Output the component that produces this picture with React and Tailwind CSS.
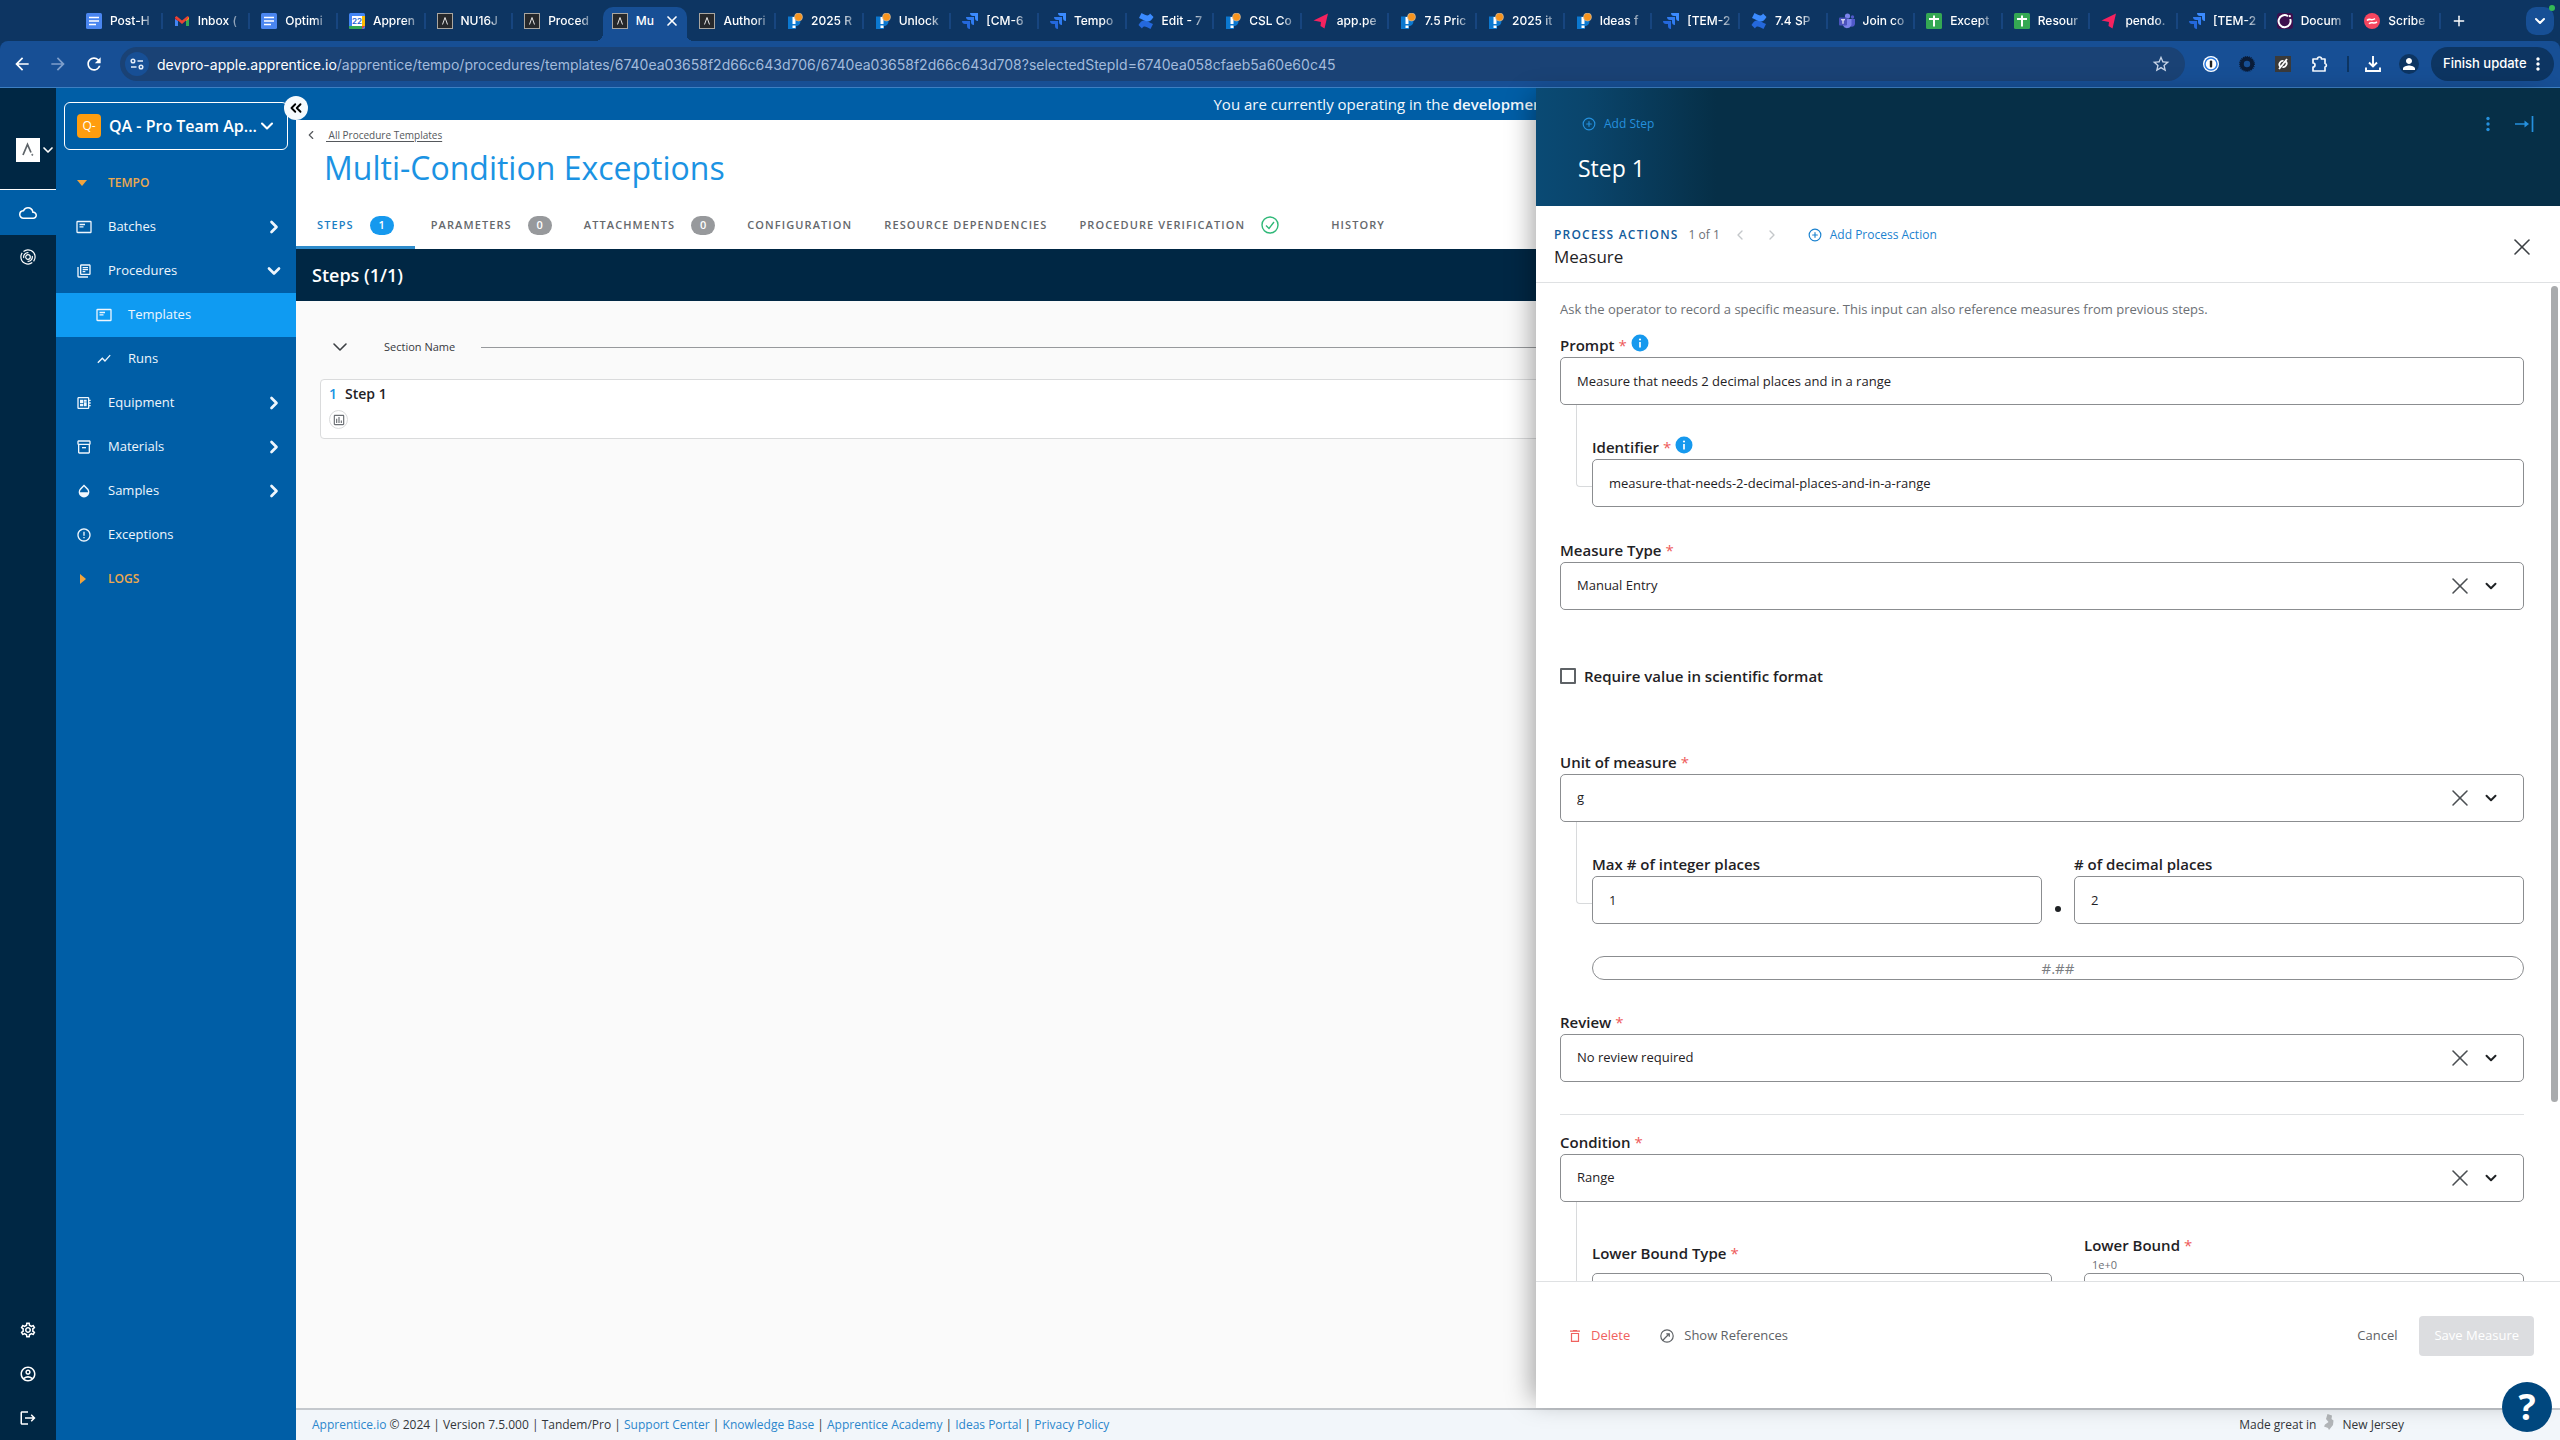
import React from "react";
import {
  MdOutlineCloud, MdOutlineLibraryBooks, MdShowChart, MdOutlineDeveloperBoard, MdOutlineInventory2,
  MdOpacity, MdErrorOutline, MdOutlineSettings, MdOutlineAccountCircle, MdLogout, MdOutlineInsertChart,
  MdStarOutline, MdPerson, MdMoreVert, MdArrowBack, MdArrowForward, MdRefresh,
} from "react-icons/md";
import { CirclePlus, ChevronDown, ChevronRight, ChevronLeft, ChevronsLeft, X, Plus } from "lucide-react";

/* ---------- favicons ---------- */
const Docs = () => (
  <svg viewBox="0 0 16 16" className="size-4 shrink-0"><rect width="16" height="16" rx="1.5" fill="#4a86f0" /><path d="M3 4.5h10M3 8h10M3 11.5h7" stroke="#fff" strokeWidth="1.6" /></svg>
);
const Gmail = () => (
  <svg viewBox="0 0 16 16" className="size-4 shrink-0">
    <path d="M1 4v9h3V7z" fill="#4285f4" /><path d="M15 4v9h-3V7z" fill="#34a853" />
    <path d="M1 3.5 4 5.5V8L1 6z" fill="#c5221f" /><path d="M15 3.5 12 5.5V8l3-2z" fill="#fbbc04" />
    <path d="M1 4.500 2.500 3 8 7.500 13.500 3 15 4.500 12 8v-.5l-4 3.500-4-3.500z" fill="#ea4335" />
  </svg>
);
const Calendar = () => (
  <svg viewBox="0 0 16 16" className="size-4 shrink-0">
    <rect width="16" height="16" rx="1.5" fill="#4285f4" /><path d="M13 3h3v10h-3z" fill="#fbbc04" />
    <path d="M0 13h13v3H1.500A1.500 1.500 0 0 1 0 14.500z" fill="#34a853" /><path d="M13 13h3l-3 3z" fill="#ea4335" />
    <rect x="3" y="3" width="10" height="10" fill="#fff" />
    <text x="8" y="11" textAnchor="middle" fontSize="8" fontWeight="600" fill="#1a62d6" fontFamily="Inter, sans-serif">22</text>
  </svg>
);
const Apprentice = () => (
  <svg viewBox="0 0 16 16" className="size-4 shrink-0"><rect x=".5" y=".5" width="15" height="15" fill="#26282b" stroke="#a9a6a0" /><path d="M5.500 11.500 8 4.500l2.500 7" fill="none" stroke="#e8e8e8" /></svg>
);
const Product = () => (
  <svg viewBox="0 0 16 16" className="size-4 shrink-0">
    <path d="M1 3.500h9a5 5 0 0 1 0 9.500H9v3H1z" fill="#0b78d0" /><path d="M5.500 4h3v7h-3zM5.500 12.500h3V15h-3z" fill="#fff" />
    <circle cx="11.500" cy="4" r="4" fill="#f7941e" stroke="#c9c2b8" strokeWidth=".6" />
  </svg>
);
const Jira = () => (
  <svg viewBox="0 0 16 16" className="size-4 shrink-0">
    <path d="M8 0h8v8c-2 0-3-1.300-3-3V3h-2C9.300 3 8 2 8 0z" fill="#3b8bff" />
    <path d="M4 4h8v8c-2 0-3-1.300-3-3V7H7C5.300 7 4 6 4 4z" fill="#2f7bf0" />
    <path d="M0 8h8v8c-2 0-3-1.300-3-3v-2H3c-1.700 0-3-1-3-3z" fill="#2468dc" />
  </svg>
);
const Confluence = () => (
  <svg viewBox="0 0 16 16" className="size-4 shrink-0">
    <path d="M.5 12C4.500 5 7.500 7.500 15 11l-2.500 5C8 14 6 12 4 15.500z" fill="#2468dc" />
    <path d="M15.500 4C11.500 11 8.500 8.500 1 5L3.500 0C8 2 10 4 12 .5z" fill="#3b8bff" />
  </svg>
);
const Pendo = () => (
  <svg viewBox="0 0 16 16" className="size-4 shrink-0"><path d="M.5 7.500 15 .5 11.500 15.500 7.500 13l.5-4z" fill="#f5225f" /></svg>
);
const Teams = () => (
  <svg viewBox="0 0 16 16" className="size-4 shrink-0">
    <circle cx="8.500" cy="3" r="2.600" fill="#7b83eb" /><circle cx="13.500" cy="4" r="1.700" fill="#5059c9" />
    <path d="M11 6h5v5a3 3 0 0 1-4 2.500z" fill="#5059c9" /><path d="M4 6h8.500v5.500a4.500 4.500 0 0 1-8.500 1z" fill="#7b83eb" />
    <rect y="4.500" width="8" height="8" rx="1" fill="#4b53bc" /><path d="M2 6.700h4M4 6.700v4" stroke="#fff" strokeWidth="1.100" />
  </svg>
);
const Sheets = () => (
  <svg viewBox="0 0 16 16" className="size-4 shrink-0"><rect width="16" height="16" rx="1.500" fill="#34a853" /><path d="M3 6h10M8 2.500v11" stroke="#fff" strokeWidth="2" /></svg>
);
const DocRing = () => (
  <svg viewBox="0 0 16 16" className="size-4 shrink-0"><rect width="16" height="16" rx="3" fill="#3d0f4e" /><path d="M11 3.200A6 6 0 1 0 13.200 6" fill="none" stroke="#fff" strokeWidth="2" /><circle cx="12.800" cy="3.200" r="1.100" fill="#fff" /></svg>
);
const Scribe = () => (
  <svg viewBox="0 0 16 16" className="size-4 shrink-0"><circle cx="8" cy="8" r="8" fill="#f5455f" /><path d="M3 7.500c3-3 4 1 8-1.800M5 10.800c3-3 4 1 8-1.800" fill="none" stroke="#fff" strokeWidth="1.600" /></svg>
);

const TABS = [
  [Docs, "Post-H"], [Gmail, "Inbox ("], [Docs, "Optimi"], [Calendar, "Appren"], [Apprentice, "NU16J"],
  [Apprentice, "Proced"], [Apprentice, "Mu", true], [Apprentice, "Authori"], [Product, "2025 R"], [Product, "Unlock"],
  [Jira, "[CM-6"], [Jira, "Tempo"], [Confluence, "Edit - 7"], [Product, "CSL Co"], [Pendo, "app.pe"],
  [Product, "7.5 Pric"], [Product, "2025 it"], [Product, "Ideas f"], [Jira, "[TEM-2"], [Confluence, "7.4 SP"],
  [Teams, "Join co"], [Sheets, "Except"], [Sheets, "Resour"], [Pendo, "pendo."], [Jira, "[TEM-2"],
  [DocRing, "Docum"], [Scribe, "Scribe"],
];

function BrowserTabs() {
  return (
    <div className="flex h-[41px] bg-[#0d3562] pl-[75px] text-[12px] font-medium text-white">
      <div className="flex min-w-0 flex-1" role="tablist">
        {TABS.map(([Icon, title, active], i) => (
          <div key={i} className="relative min-w-0 flex-1 pt-[7px]">
            {active && (
              <>
                <span className="absolute bottom-0 -left-1.5 size-2 bg-[radial-gradient(circle_at_0_0,transparent_8px,#174f95_8px)]" />
                <span className="absolute bottom-0 -right-1.5 size-2 bg-[radial-gradient(circle_at_100%_0,transparent_8px,#174f95_8px)]" />
              </>
            )}
            <button
              role="tab"
              aria-selected={!!active}
              className={active
                ? "mx-0.5 flex h-[34px] w-[84px] items-center rounded-t-[10px] bg-[#174f95] pb-[7px] pl-[9px]"
                : "flex h-[34px] w-full items-center pb-[7px] pl-[11px]"}
            >
              <Icon />
              <span className={active
                ? "ml-2 whitespace-nowrap"
                : "ml-2 text-left whitespace-nowrap [mask-image:linear-gradient(to_right,#000_75%,#0006)]"}>{title}</span>
              {active && <X className="ml-2.5 size-4 shrink-0" strokeWidth={2.5} />}
            </button>
            {!active && i !== 5 && <span className="absolute top-[13px] right-0 h-4 w-[2px] bg-[#17457f]" />}
          </div>
        ))}
      </div>
      <div className="flex w-[119px] justify-between pt-[7px] pr-1.5">
        <button aria-label="New tab" className="ml-2.5 flex h-7 items-center"><Plus className="size-4" strokeWidth={2.2} /></button>
        <button aria-label="Search tabs" className="relative flex size-7 items-center justify-center rounded-[10px] bg-[#174f95]">
          <ChevronDown className="size-4" strokeWidth={3} />
          <span className="absolute -top-0.5 -right-px size-1.5 rounded-full bg-[#34b856]" />
        </button>
      </div>
    </div>
  );
}

function Toolbar() {
  return (
    <div className="bg-[#0d3562]">
      <div className="flex h-[47px] items-center rounded-t-lg border-b border-[#3d7fc2] bg-[#174f95] pr-1.5 pl-3 text-white">
        <button aria-label="Back" className="flex w-9 shrink-0"><MdArrowBack className="size-5" /></button>
        <button aria-label="Forward" className="flex w-9 shrink-0 text-[#7f9fcb]"><MdArrowForward className="size-5" /></button>
        <button aria-label="Reload" className="flex w-9 shrink-0"><MdRefresh className="size-5" /></button>
        <div className="flex h-[34px] min-w-0 flex-1 items-center rounded-full bg-[#1a4275] pr-3.5 pl-[5px]">
          <button aria-label="Site information" className="flex size-6 shrink-0 items-center justify-center rounded-full bg-[#174f95]">
            <svg viewBox="0 0 16 16" className="size-4" fill="none" stroke="#e5edf8" strokeWidth="1.500"><circle cx="4" cy="5" r="1.800" /><path d="M8.500 5H14M2 11h5.500" /><circle cx="12" cy="11" r="1.800" /></svg>
          </button>
          <p className="ml-2 min-w-0 flex-1 truncate text-[14px] text-[#a3bbdc]"><span className="text-white">devpro-apple.apprentice.io</span>/apprentice/tempo/procedures/templates/6740ea03658f2d66c643d706/6740ea03658f2d66c643d708?selectedStepId=6740ea058cfaeb5a60e60c45</p>
          <button aria-label="Bookmark"><MdStarOutline className="size-5 text-[#c6d3e6]" /></button>
        </div>
        <div className="ml-[18px] flex items-center gap-5">
          <svg viewBox="0 0 16 16" className="size-4"><circle cx="8" cy="8" r="8" fill="#fff" /><circle cx="8" cy="8" r="6" fill="#fff" stroke="#2c7be0" strokeWidth="1.500" /><rect x="6.800" y="4.500" width="2.400" height="7" rx="1" fill="#222" /></svg>
          <svg viewBox="0 0 16 16" className="size-4"><circle cx="8" cy="8" r="5.200" fill="none" stroke="#0a1c38" strokeWidth="4" /><circle cx="8" cy="8" r="7.300" fill="none" stroke="#0a1c38" strokeWidth="1.400" strokeDasharray="1 1" /></svg>
          <svg viewBox="0 0 16 16" className="size-4"><rect width="16" height="16" fill="#3a3a3a" /><path d="m4 13 8-10M5 10.500C3 8 6 4 8.500 5M11 5.500c2 2.500-1 6.500-3.500 5.500" fill="none" stroke="#fff" strokeWidth="1.800" /></svg>
          <svg viewBox="0 0 18 18" className="size-[18px]" fill="none" stroke="#f4f8fd" strokeWidth="1.700" strokeLinejoin="round"><path d="M2 4h4.500a2 2 0 0 1 4 0H14v4.500a1.800 1.800 0 0 1 0 3.500v4H2v-4a2 2 0 0 0 0-4z" /></svg>
        </div>
        <span className="ml-[18px] h-4 w-[2px] bg-[#0d3562]" />
        <button aria-label="Downloads" className="ml-4"><svg viewBox="0 0 16 16" className="size-4" fill="none" stroke="#fff" strokeWidth="1.900"><path d="M8 0v10M4 6.500 8 10.500l4-4M1 11.500V15h14v-3.500" /></svg></button>
        <button aria-label="Profile" className="ml-[18px] flex size-5 items-center justify-center rounded-full bg-[#0d3562]"><MdPerson className="size-[18px]" /></button>
        <button className="ml-3 flex h-[34px] w-[123px] items-center justify-between rounded-full bg-[#0d3562] pr-1.5 pl-3 text-[13px] font-medium whitespace-nowrap">Finish update<MdMoreVert className="size-5 shrink-0" /></button>
      </div>
    </div>
  );
}

/* ---------- left navigation ---------- */
const PanelIcon = ({ className }) => (
  <svg viewBox="0 0 16 16" className={className} fill="none" stroke="currentColor" strokeWidth="1.300"><rect x="1" y="2.500" width="14" height="11" rx=".6" /><path d="M3.500 5.500h5.500M3.500 7.800h4" /></svg>
);
const Swirl = () => (
  <svg viewBox="0 0 16 16" className="size-4" fill="none" stroke="#fff" strokeWidth="1.200">
    <path d="M3.500 2.500A7.100 7.100 0 0 1 15.100 8a7.100 7.100 0 0 1-1.500 4.400M12.300 13.600A7.100 7.100 0 0 1 .9 8a7 7 0 0 1 1.300-4.200" />
    <circle cx="8" cy="8" r="2.300" /><path d="M3.800 9a4.300 4.300 0 0 1 4.600-5.300M12.200 7a4.300 4.300 0 0 1-4.600 5.300" />
  </svg>
);

function Rail() {
  return (
    <nav aria-label="Products" className="flex w-14 shrink-0 flex-col bg-[#002744] text-white">
      <button aria-label="Switch product" className="flex h-[102px] items-center border-b border-white pt-[22px] pl-4">
        <span className="flex size-6 items-center justify-center bg-white">
          <svg viewBox="0 0 16 16" className="size-4" fill="none" stroke="#5d6368" strokeWidth="1.700"><path d="M3 13 7.500 2.500 11 10.500" /><circle cx="12.300" cy="12.800" r=".6" fill="#5d6368" strokeWidth=".8" /></svg>
        </span>
        <ChevronDown className="size-4" strokeWidth={2.5} />
      </button>
      <button aria-label="Tempo" className="flex h-[45px] items-center justify-center bg-[#005ea6]"><MdOutlineCloud className="size-[18px]" /></button>
      <button aria-label="Tandem" className="flex h-11 items-center justify-center"><Swirl /></button>
      <div className="flex-1" />
      <button aria-label="Settings" className="flex h-11 items-center justify-center"><MdOutlineSettings className="size-[18px]" /></button>
      <button aria-label="Account" className="flex h-11 items-center justify-center"><MdOutlineAccountCircle className="size-[18px]" /></button>
      <button aria-label="Log out" className="flex h-11 items-center justify-center"><MdLogout className="size-[18px]" /></button>
    </nav>
  );
}

function NavRow({ icon: Icon, label, chevron: Chev, nested, active }) {
  return (
    <li>
      <a href="#" className={`flex h-11 items-center pr-3 ${nested ? "pl-10" : "pl-5"} ${active ? "bg-[#0f9bf2]" : ""}`}>
        <Icon className="size-4" />
        <span className="ml-4 flex-1">{label}</span>
        {Chev && <Chev className="size-5" strokeWidth={3.2} />}
      </a>
    </li>
  );
}

function Sidebar() {
  return (
    <aside className="relative w-60 shrink-0 bg-[#005ea6] text-[13px] text-[#eef6fd]">
      <button className="mt-3.5 ml-2 flex h-12 w-56 items-center rounded-md border border-white pr-2.5 pl-3 text-[16px] font-semibold text-white">
        <span className="flex size-6 items-center justify-center rounded bg-[#ff9d0e] text-[12px] font-normal">Q-</span>
        <span className="ml-2 flex-1 text-left whitespace-nowrap">QA - Pro Team Ap...</span>
        <ChevronDown className="size-5" strokeWidth={2.5} />
      </button>
      <button aria-label="Collapse menu" className="absolute top-2 -right-3 z-10 flex size-6 items-center justify-center rounded-full bg-[#f6fafd] text-black"><ChevronsLeft className="size-[18px]" strokeWidth={2.5} /></button>
      <ul className="mt-[11px]">
        <li><button className="flex h-11 w-full items-center pl-[21px] text-[12px] font-semibold text-[#eda94e]"><svg viewBox="0 0 10 6" className="h-1.5 w-2.5"><path d="M0 0h10L5 6z" fill="#f2a43c" /></svg><span className="ml-[21px]">TEMPO</span></button></li>
        <NavRow icon={PanelIcon} label="Batches" chevron={ChevronRight} />
        <NavRow icon={MdOutlineLibraryBooks} label="Procedures" chevron={ChevronDown} />
        <NavRow icon={PanelIcon} label="Templates" nested active />
        <NavRow icon={MdShowChart} label="Runs" nested />
        <NavRow icon={MdOutlineDeveloperBoard} label="Equipment" chevron={ChevronRight} />
        <NavRow icon={MdOutlineInventory2} label="Materials" chevron={ChevronRight} />
        <NavRow icon={MdOpacity} label="Samples" chevron={ChevronRight} />
        <NavRow icon={MdErrorOutline} label="Exceptions" />
        <li><button className="flex h-11 w-full items-center pl-[24px] text-[12px] font-semibold text-[#eda94e]"><svg viewBox="0 0 6 10" className="h-2.5 w-1.5"><path d="M0 0v10l6-5z" fill="#f2a43c" /></svg><span className="ml-[22px]">LOGS</span></button></li>
      </ul>
    </aside>
  );
}

/* ---------- main area ---------- */
function PageTab({ label, count, active, check }) {
  return (
    <button
      role="tab"
      aria-selected={!!active}
      className={active
        ? "flex h-12 items-center border-b-[3px] border-[#2d8bcb] pt-[3px] pr-[21px] pl-[21px] text-[#1b7fc4]"
        : check ? "flex h-12 items-center pr-9 pl-4" : "flex h-12 items-center px-4"}
    >
      <span>{label}</span>
      {count !== undefined && <span className={`ml-4 flex h-[19px] w-6 items-center justify-center rounded-[10px] tracking-normal text-white ${active ? "bg-[#1699ee]" : "bg-[#97999c]"}`}>{count}</span>}
      {check && <svg viewBox="0 0 18 18" className="ml-4 size-[18px]" fill="none" stroke="#2fb878" strokeWidth="1.400"><circle cx="9" cy="9" r="8" /><path d="m5 9.500 3 3 5-6.500" /></svg>}
    </button>
  );
}

function Main() {
  return (
    <main className="flex min-w-0 flex-1 flex-col bg-[#fafafa]">
      <p className="h-8 bg-[#005ea6] text-center text-[15px] leading-8 text-[#f2f8fd]">You are currently operating in the <b className="font-semibold">development</b> environment</p>
      <header className="bg-white">
        <div className="flex h-[30px] items-center pl-2 text-[10px] text-[#55585c]">
          <ChevronLeft className="size-3.5" strokeWidth={2} />
          <a href="#" className="ml-2 whitespace-pre underline underline-offset-2"> All Procedure Templates</a>
        </div>
        <h1 className="pl-7 text-[32px] leading-9 text-[#1b93e3]">Multi-Condition Exceptions</h1>
        <div role="tablist" className="mt-[15px] flex text-[11px] font-semibold tracking-widest text-[#65686c]">
          <PageTab label="STEPS" count={1} active />
          <PageTab label="PARAMETERS" count={0} />
          <PageTab label="ATTACHMENTS" count={0} />
          <PageTab label="CONFIGURATION" />
          <PageTab label="RESOURCE DEPENDENCIES" />
          <PageTab label="PROCEDURE VERIFICATION" check />
          <PageTab label="HISTORY" />
        </div>
      </header>
      <h2 className="h-[52px] bg-[#002744] pl-4 text-[18px] leading-[52px] font-semibold text-white">Steps (1/1)</h2>
      <section className="pt-9 pl-6">
        <div className="flex h-5 items-center">
          <button aria-label="Collapse section" className="ml-2"><ChevronDown className="size-6 text-[#3c4044]" strokeWidth={1.6} /></button>
          <span className="ml-8 text-[11px] text-[#36393d]">Section Name</span>
          <span className="ml-[26px] h-px flex-1 bg-[#97999c]" />
        </div>
        <article className="mt-[22px] h-[60px] rounded-l border border-[#dadbdc] bg-white pl-2">
          <h3 className="pt-1 text-[14px] leading-5 font-semibold text-[#1f2225]"><span className="mr-2 text-[#1b93e3]">1</span>Step 1</h3>
          <span className="mt-1.5 flex size-[19px] items-center justify-center rounded-full border border-[#dadbdc] text-[#6c7075]"><MdOutlineInsertChart className="size-3.5" /></span>
        </article>
      </section>
      <div className="flex-1" />
      <footer className="flex h-8 items-center border-t-2 border-[#c4c8cd] bg-[#f2f6fa] pr-[156px] pl-4 text-[12px] text-[#33363a]">
        <p className="flex-1">
          <FootLink>Apprentice.io</FootLink> © 2024 | Version 7.5.000 | Tandem/Pro | <FootLink>Support Center</FootLink> | <FootLink>Knowledge Base</FootLink> | <FootLink>Apprentice Academy</FootLink> | <FootLink>Ideas Portal</FootLink> | <FootLink>Privacy Policy</FootLink>
        </p>
        <span>Made great in</span>
        <svg viewBox="0 0 10 16" className="mx-2 mb-1.5 h-4 w-2.5"><path d="M3.500 0 8 1.500 7.500 5 9.500 6.500 9 11 5 16 4 14 0 12.500 1 10.500 4.500 8 2 5z" fill="#b3b6b9" /></svg>
        <span>New Jersey</span>
      </footer>
    </main>
  );
}
const FootLink = ({ children }) => <a href="#" className="text-[#2b86cc]">{children}</a>;

/* ---------- drawer ---------- */
const Label = ({ id, children, required, info }) => (
  <label htmlFor={id} className="flex h-6 items-center text-[15px] font-semibold whitespace-nowrap text-[#1f2225]">
    {children}
    {required && <span className="ml-1 font-normal text-[#ee5a5a]">*</span>}
    {info && <svg viewBox="0 0 18 18" className="mb-1 ml-1 size-[18px]"><circle cx="9" cy="9" r="8.500" fill="#1699ee" /><circle cx="9" cy="5.500" r="1.100" fill="#fff" /><path d="M9 8v5.500" stroke="#fff" strokeWidth="1.700" /></svg>}
  </label>
);
const TextField = ({ id, value }) => (
  <input id={id} type="text" defaultValue={value} className="block h-12 w-full rounded-[5px] border border-[#8b8d90] bg-white px-4 text-[13px] text-[#1f2225]" />
);
const SelectField = ({ id, value }) => (
  <div className="flex h-12 items-center rounded-[5px] border border-[#8b8d90] bg-white pr-[23px] text-[#1f2225]">
    <select id={id} className="h-full flex-1 appearance-none bg-transparent pl-4 text-[13px]"><option>{value}</option></select>
    <button type="button" aria-label="Clear" className="mr-2"><X className="size-7 text-[#4b4f53]" strokeWidth={1.3} /></button>
    <ChevronDown className="size-[18px]" strokeWidth={2.6} />
  </div>
);
const Connector = () => <span className="ml-4 h-[82px] w-4 shrink-0 rounded-bl-sm border-b border-l border-[#d8dadc]" />;

function Drawer() {
  return (
    <aside aria-label="Step editor" className="absolute top-0 right-0 bottom-8 flex w-2/5 flex-col bg-white shadow-[-12px_0_24px_-8px_rgba(0,0,0,0.35)]">
      <header className="h-[118px] shrink-0 bg-[linear-gradient(to_right,#0a4a74,#0a456c_50px,#062f47_180px)] pt-[26px] pr-[26px] pl-[42px]">
        <div className="flex h-5 items-center text-[12px] text-[#2590dd]">
          <button className="flex flex-1 items-center pl-1"><CirclePlus className="size-3.5" strokeWidth={2} /><span className="ml-2">Add Step</span></button>
          <button aria-label="More"><svg viewBox="0 0 4 16" className="h-4 w-1" fill="currentColor"><circle cx="2" cy="2.500" r="1.700" /><circle cx="2" cy="8" r="1.700" /><circle cx="2" cy="13.500" r="1.700" /></svg></button>
          <button aria-label="Dock panel" className="ml-6"><svg viewBox="0 0 20 16" className="h-4 w-5" fill="none" stroke="currentColor" strokeWidth="1.700"><path d="M1 8h12M18.500 0v16" /><path d="m10.500 4.500 4.500 3.500-4.500 3.500z" fill="currentColor" stroke="none" /></svg></button>
        </div>
        <h2 className="mt-[18px] text-[23px] leading-8 text-white">Step 1</h2>
      </header>
      <div className="flex h-[77px] shrink-0 items-center border-b border-[#dfe1e3] pt-1.5 pr-6 pl-[18px]">
        <div className="flex-1">
          <div className="flex h-5 items-center text-[12px] text-[#1b82cf]">
            <span className="font-semibold tracking-widest text-[#135c9c]">PROCESS ACTIONS</span>
            <span className="ml-2.5 text-[#6c7075]">1 of 1</span>
            <button aria-label="Previous" className="ml-3"><ChevronLeft className="size-4 text-[#c4c7ca]" /></button>
            <button aria-label="Next" className="ml-4"><ChevronRight className="size-4 text-[#c4c7ca]" /></button>
            <button className="ml-7 flex items-center"><CirclePlus className="size-3.5" /><span className="ml-2">Add Process Action</span></button>
          </div>
          <h3 className="text-[17px] leading-6 font-medium text-[#1f2225]">Measure</h3>
        </div>
        <button aria-label="Close"><X className="size-7 text-[#3c4044]" strokeWidth={1.4} /></button>
      </div>

      <form className="relative min-h-0 flex-1 overflow-hidden pt-4 pr-9 pl-6">
        <span className="absolute top-[3px] right-0.5 h-[816px] w-[7px] rounded-full bg-[#a9abad]" />
        <p className="h-5 text-[13px] leading-5 text-[#6c7075]">Ask the operator to record a specific measure. This input can also reference measures from previous steps.</p>
        <div className="mt-3.5"><Label id="prompt" required info>Prompt</Label><TextField id="prompt" value="Measure that needs 2 decimal places and in a range" /></div>
        <div className="flex">
          <Connector />
          <div className="flex-1 pt-[30px]"><Label id="identifier" required info>Identifier</Label><TextField id="identifier" value="measure-that-needs-2-decimal-places-and-in-a-range" /></div>
        </div>
        <div className="mt-[31px]"><Label id="mtype" required>Measure Type</Label><SelectField id="mtype" value="Manual Entry" /></div>
        <div className="mt-[54px] flex h-6 items-center gap-2">
          <input id="sci" type="checkbox" className="size-4 appearance-none rounded-[1px] border-2 border-[#5e6266] bg-white" />
          <label htmlFor="sci" className="text-[15px] font-semibold text-[#1f2225]">Require value in scientific format</label>
        </div>
        <div className="mt-[62px]"><Label id="unit" required>Unit of measure</Label><SelectField id="unit" value="g" /></div>
        <div className="flex">
          <Connector />
          <div className="flex-1 pt-[30px]">
            <div className="flex">
              <div className="flex-1"><Label id="ints">Max # of integer places</Label><TextField id="ints" value="1" /></div>
              <span className="flex w-8 justify-center pt-[54px]"><span className="size-1.5 rounded-full bg-[#1f2225]" /></span>
              <div className="flex-1"><Label id="decs"># of decimal places</Label><TextField id="decs" value="2" /></div>
            </div>
            <output className="mt-8 block h-6 rounded-full border border-[#8b8d90] text-center text-[15px] leading-[22px] text-[#7b7e82]">#.##</output>
          </div>
        </div>
        <div className="mt-[30px]"><Label id="review" required>Review</Label><SelectField id="review" value="No review required" /></div>
        <hr className="mt-8 border-[#dfe1e3]" />
        <div className="mt-[15px]"><Label id="condition" required>Condition</Label><SelectField id="condition" value="Range" /></div>
        <div className="flex">
          <Connector />
          <div className="flex flex-1 items-end gap-8 pt-[31px]">
            <div className="w-[460px]"><Label id="lbt" required>Lower Bound Type</Label><div className="mt-2"><SelectField id="lbt" value="Inclusive" /></div></div>
            <div className="flex-1"><Label id="lb" required>Lower Bound</Label><p className="h-4 pl-2 text-[11px] leading-4 text-[#6c7075]">1e+0</p><TextField id="lb" value="1" /></div>
          </div>
        </div>
      </form>

      <footer className="flex h-[127px] shrink-0 border-t border-[#dfe1e3] pt-[34px] pr-[26px] pl-[34px] text-[13px] text-[#5e6266]">
        <button className="flex h-10 items-center text-[#f0625f]">
          <svg viewBox="0 0 10 12" className="h-3 w-2.5" fill="none" stroke="currentColor" strokeWidth="1.200"><path d="M0 1.200h10M3 .7h4M1.500 3.500h7v7.800h-7z" /></svg>
          <span className="ml-[11px]">Delete</span>
        </button>
        <button className="ml-[30px] flex h-10 items-center">
          <svg viewBox="0 0 14 14" className="size-3.5" fill="none" stroke="currentColor" strokeWidth="1.200"><circle cx="7" cy="7" r="6.200" /><path d="m4.500 9.500 4-4M6.300 4.800h3v3M2.500 11.800l2-2.300" /></svg>
          <span className="ml-2.5">Show References</span>
        </button>
        <div className="flex-1" />
        <button className="h-10">Cancel</button>
        <button disabled className="ml-[22px] h-10 rounded bg-[#dcdde0] px-[15px] text-white">Save Measure</button>
      </footer>
    </aside>
  );
}

export default function App() {
  return (
    <div className="flex h-screen flex-col overflow-hidden font-['Open_Sans','Noto_Sans',sans-serif]">
      <div className="font-[Inter,sans-serif]">
        <BrowserTabs />
        <Toolbar />
      </div>
      <div className="relative flex min-h-0 flex-1">
        <Rail />
        <Sidebar />
        <Main />
        <Drawer />
        <button aria-label="Help" className="absolute right-2 bottom-2 flex size-[50px] items-center justify-center rounded-full bg-[#00477e] text-[36px] font-bold text-white">?</button>
      </div>
    </div>
  );
}
